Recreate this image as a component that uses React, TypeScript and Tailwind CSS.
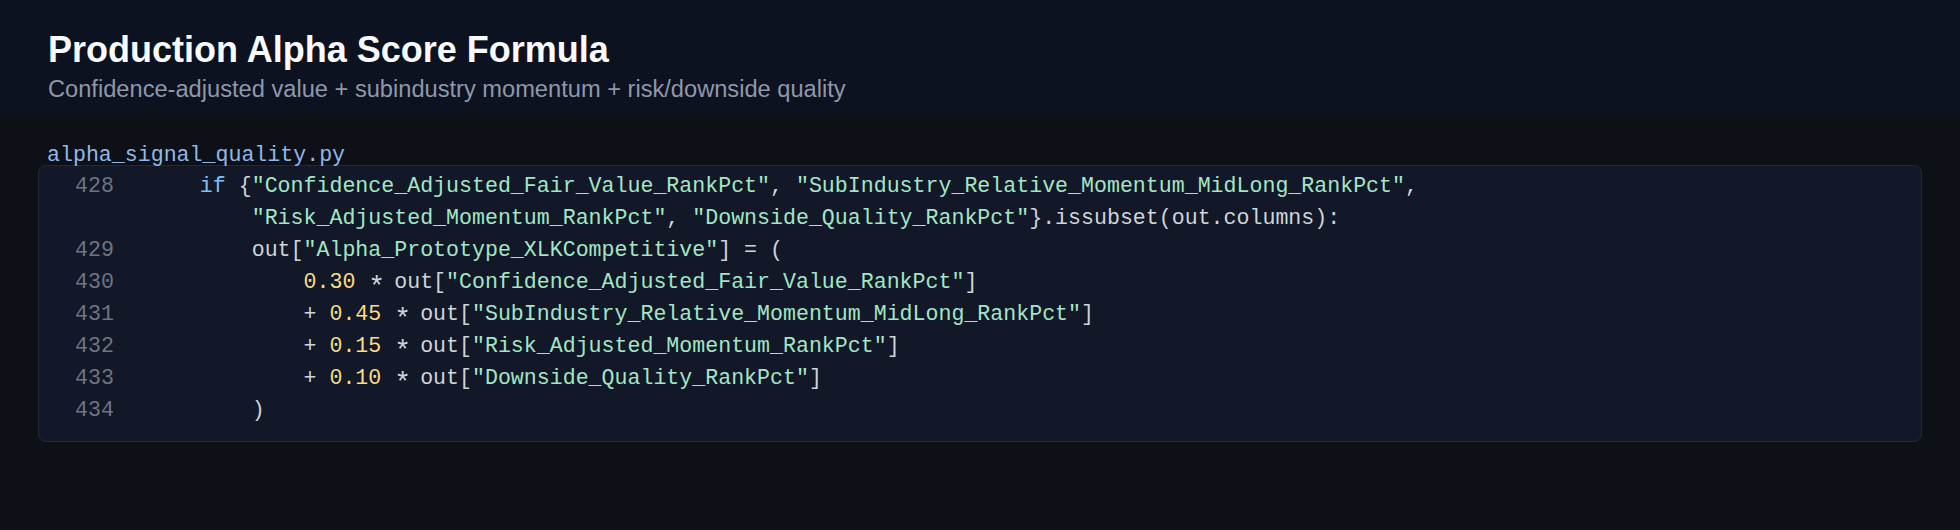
import React from "react";

type Tok = { t: string; c?: "kw" | "str" | "num" | "pl" | "op" };

const C = {
  kw: "text-[#7fc1f5]",
  str: "text-[#a3e6c6]",
  num: "text-[#fcdc84]",
  pl: "text-[#cfd4dc]",
  op: "inline-block w-[12.96px] text-center text-[28px] leading-none translate-y-[7px] text-[#cfd4dc]",
};

const lines: { n: string; toks: Tok[] }[] = [
  {
    n: "428",
    toks: [
      { t: "    " },
      { t: "if", c: "kw" },
      { t: " {" },
      { t: '"Confidence_Adjusted_Fair_Value_RankPct"', c: "str" },
      { t: ", " },
      { t: '"SubIndustry_Relative_Momentum_MidLong_RankPct"', c: "str" },
      { t: "," },
    ],
  },
  {
    n: "",
    toks: [
      { t: "        " },
      { t: '"Risk_Adjusted_Momentum_RankPct"', c: "str" },
      { t: ", " },
      { t: '"Downside_Quality_RankPct"', c: "str" },
      { t: "}.issubset(out.columns):" },
    ],
  },
  {
    n: "429",
    toks: [
      { t: "        out[" },
      { t: '"Alpha_Prototype_XLKCompetitive"', c: "str" },
      { t: "] = (" },
    ],
  },
  {
    n: "430",
    toks: [
      { t: "            " },
      { t: "0.30", c: "num" },
      { t: " " },
      { t: "*", c: "op" },
      { t: " out[" },
      { t: '"Confidence_Adjusted_Fair_Value_RankPct"', c: "str" },
      { t: "]" },
    ],
  },
  {
    n: "431",
    toks: [
      { t: "            + " },
      { t: "0.45", c: "num" },
      { t: " " },
      { t: "*", c: "op" },
      { t: " out[" },
      { t: '"SubIndustry_Relative_Momentum_MidLong_RankPct"', c: "str" },
      { t: "]" },
    ],
  },
  {
    n: "432",
    toks: [
      { t: "            + " },
      { t: "0.15", c: "num" },
      { t: " " },
      { t: "*", c: "op" },
      { t: " out[" },
      { t: '"Risk_Adjusted_Momentum_RankPct"', c: "str" },
      { t: "]" },
    ],
  },
  {
    n: "433",
    toks: [
      { t: "            + " },
      { t: "0.10", c: "num" },
      { t: " " },
      { t: "*", c: "op" },
      { t: " out[" },
      { t: '"Downside_Quality_RankPct"', c: "str" },
      { t: "]" },
    ],
  },
  {
    n: "434",
    toks: [{ t: "        )" }],
  },
];

export default function App() {
  return (
    <div className="min-h-[530px] w-full bg-[#0d1017]">
      <header className="bg-[#0c1220] px-[48px] pt-[28px] pb-[8px] font-['Liberation_Sans',Arial,sans-serif]">
        <h1 className="text-[36px] leading-[44px] font-bold text-[#f8fafc]">
          Production Alpha Score Formula
        </h1>
        <p className="mt-[1px] text-[23.65px] leading-[32px] text-[#8e98ab]">
          Confidence-adjusted value + subindustry momentum + risk/downside quality
        </p>
      </header>
      <main className="px-[38px] pt-[32px] font-['Liberation_Mono','DejaVu_Sans_Mono',monospace] text-[21.6px]">
        <div className="pl-[9px] leading-[20px] text-[#90b8ea]">alpha_signal_quality.py</div>
        <div className="rounded-[8px] border border-[#222a3a] bg-[#121827] pt-[4px] pb-[15px] leading-[32px]">
          {lines.map((l, i) => (
            <div key={i} className="flex">
              <span className="w-[75px] shrink-0 text-right text-[#6e7582]">{l.n}</span>
              <span className="ml-[34px] whitespace-pre text-[#cfd4dc]">
                {l.toks.map((tk, j) => (
                  <span key={j} className={C[tk.c ?? "pl"]}>
                    {tk.t}
                  </span>
                ))}
              </span>
            </div>
          ))}
        </div>
      </main>
    </div>
  );
}
